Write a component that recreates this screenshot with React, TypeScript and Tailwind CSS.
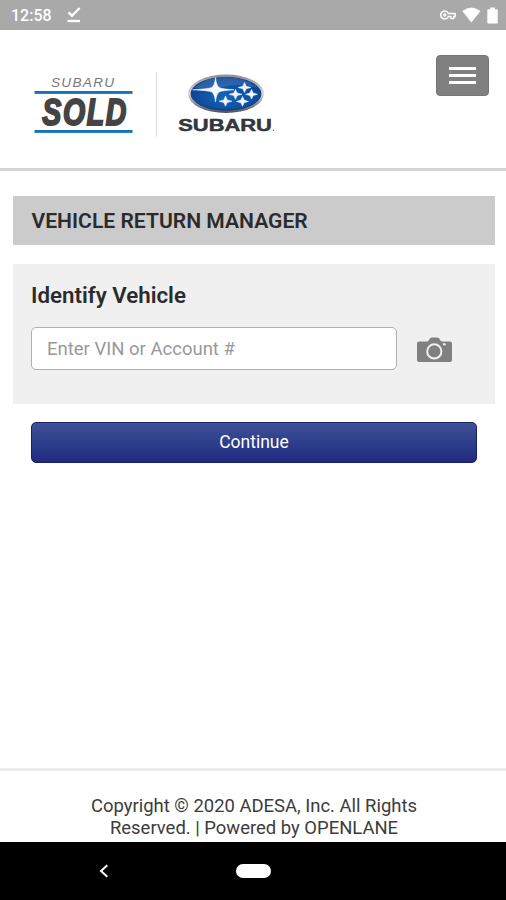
import React from 'react';

const StatusBar: React.FC = () => {
  return (
    <div className="h-[30px] bg-[#a9a9a9] flex items-center justify-between pl-[11px] pr-[8px] text-white">
      <div className="flex items-center gap-[15px]">
        <span className="text-[16px] leading-[30px] font-medium pt-[2px]">12:58</span>
        <svg width="14" height="16" viewBox="0 0 14 16" fill="none" stroke="#fff" strokeWidth="2.4">
          <path d="M1.6 5.4 5 8.8 12.6 1" />
          <path d="M0.5 14h12.5" />
        </svg>
      </div>
      <div className="flex items-center">
        <svg width="16" height="10" viewBox="0 0 16 10" fill="none" stroke="#fff" strokeWidth="1.5">
          <path d="M8.4 3.5A4 4 0 1 0 8.4 6.5H10.9V8.5H13.8V6.5H15.2V3.5Z" strokeLinejoin="round" />
          <circle cx="4.8" cy="5" r="1" />
        </svg>
        <svg className="ml-[6px]" width="19" height="16" viewBox="0 0 19 16">
          <path d="M0.3 4Q9.3-3.2 18.5 4L9.4 15.5Z" fill="#fff" />
        </svg>
        <svg className="ml-[6px]" width="11" height="17" viewBox="0 0 11 17">
          <path d="M3.2 0.5h4.6v1.8h2Q10.7 2.3 10.7 3.2V15.5Q10.7 16.5 9.8 16.5H1.2Q0.3 16.5 0.3 15.5V3.2Q0.3 2.3 1.2 2.3h2Z" fill="#fff" />
        </svg>
      </div>
    </div>
  );
};

const SoldLogo: React.FC = () => {
  return (
    <svg width="100" height="66" viewBox="34 72 100 66" fontFamily="Liberation Sans, Arial, sans-serif" fontStyle="italic">
      <text transform="translate(51 87.3)" fontSize="13.6" fill="#777" letterSpacing="1.3">SUBARU</text>
      <rect x="34.5" y="91" width="98" height="2.9" fill="#1673bd" />
      <text transform="translate(42.2 125) scale(0.76 1)" fontSize="37.5" fontWeight="bold" fill="#444" stroke="#444" strokeWidth="2" letterSpacing="2.2">SOLD</text>
      <rect x="34.5" y="130" width="98" height="2.9" fill="#1673bd" />
    </svg>
  );
};

const SubaruLogo: React.FC = () => {
  return (
    <svg width="100" height="66" viewBox="177 72 100 66" fontFamily="Liberation Sans, Arial, sans-serif">
      <defs>
        <linearGradient id="rim" x1="0" y1="0" x2="0" y2="1">
          <stop offset="0" stopColor="#8b8f96" />
          <stop offset="0.5" stopColor="#d5d8dc" />
          <stop offset="1" stopColor="#4a4e55" />
        </linearGradient>
        <radialGradient id="blue" cx="0.5" cy="0.6" r="0.6">
          <stop offset="0" stopColor="#1568bd" />
          <stop offset="1" stopColor="#0b3f8f" />
        </radialGradient>
      </defs>
      <ellipse cx="226" cy="93.8" rx="38" ry="19.2" fill="url(#rim)" />
      <ellipse cx="226" cy="93.8" rx="35" ry="16.4" fill="url(#blue)" stroke="#123468" strokeWidth="0.8" />
      <path d="M194 88Q206 77 226 77.6Q247 77.5 258 88Q239 82.5 223 87Q208 91 194 88Z" fill="#6fa0d6" opacity="0.3" />
      <g fill="#f4f7fb" stroke="#f4f7fb" strokeWidth="0.5">
        <path d="M215.5 77.5Q216.5 86.2 219.3 87.6Q222 89 234 89.8Q222 90.6 219.3 92Q216.5 93.4 215.5 102Q214.5 93.4 211.7 92Q208 90.6 192.5 89.8Q208 89 211.7 87.6Q214.5 86.2 215.5 77.5Z" />
        <path d="M244.5 82.5L246.2 86.2 251 87.5 246.2 88.8 244.5 92.5 242.8 88.8 238 87.5 242.8 86.2Z" />
        <path d="M235.5 89.5L237.2 93 242 94.3 237.2 95.6 235.5 99.3 233.8 95.6 229 94.3 233.8 93Z" />
        <path d="M251.5 89.5L253.2 93 257.5 94.3 253.2 95.6 251.5 99.1 249.8 95.6 245.5 94.3 249.8 93Z" />
        <path d="M225.5 96L227.2 99.9 232 101.2 227.2 102.5 225.5 106.2 223.8 102.5 219 101.2 223.8 99.9Z" />
        <path d="M242.5 96.5L244.2 100.1 248.5 101.4 244.2 102.7 242.5 106.3 240.8 102.7 236.5 101.4 240.8 100.1Z" />
      </g>
      <text transform="translate(178.2 130.9) scale(1.26 1)" fontSize="17.4" fontWeight="bold" fill="#33363b" stroke="#33363b" strokeWidth="0.5">SUBARU</text>
      <circle cx="273.6" cy="130.3" r="0.6" fill="#555" />
    </svg>
  );
};

const Header: React.FC = () => {
  return (
    <header className="h-[141px] border-b-[3px] border-[#d4d4d4] flex items-start justify-between pl-[34px] pr-[17px]">
      <div className="flex pt-[42px]">
        <SoldLogo />
        <div className="w-px h-[65px] bg-[#dedede] ml-[22px] mr-[20px]" />
        <SubaruLogo />
      </div>
      <button className="mt-[25px] w-[53px] h-[41px] rounded-[4px] bg-[#808080] border border-[#757575] flex flex-col items-center justify-center gap-[4px]">
        <span className="w-[27px] h-[3px] bg-white" />
        <span className="w-[27px] h-[3px] bg-white" />
        <span className="w-[27px] h-[3px] bg-white" />
      </button>
    </header>
  );
};

const CameraIcon: React.FC = () => {
  return (
    <svg width="35" height="26" viewBox="0 0 35 26">
      <path d="M2 4.5H10Q11.5 4.3 12.3 2.5Q13.2 0.5 15 0.5H20Q22 0.5 22.9 2.5Q23.7 4.3 25.2 4.5H33Q35 4.5 35 6.5V23Q35 25 33 25H2Q0 25 0 23V6.5Q0 4.5 2 4.5Z" fill="#808080" />
      <circle cx="17.3" cy="14.4" r="7.1" fill="none" stroke="#f0f0f0" strokeWidth="2" />
      <circle cx="27.3" cy="7.3" r="1.3" fill="#f0f0f0" />
    </svg>
  );
};

export default function App() {
  return (
    <div className="w-full h-[900px] bg-white flex flex-col font-['Roboto',sans-serif] text-[#2b2b2b] overflow-hidden">
      <StatusBar />
      <Header />
      <main className="flex-1 pl-[13px] pr-[11px] pt-[25px]">
        <h1 className="h-[49px] bg-[#cbcbcb] pl-[18.5px] text-[21.1px] leading-[50px] font-semibold">
          VEHICLE RETURN MANAGER
        </h1>
        <section className="mt-[19px] h-[140px] bg-[#f0f0f0] px-[18px] pt-[18px]">
          <h2 className="text-[22.3px] leading-[26px] font-semibold">Identify Vehicle</h2>
          <div className="mt-[19px] flex items-center">
            <input
              type="text"
              placeholder="Enter VIN or Account #"
              className="w-[366px] h-[43px] rounded-[5px] border border-[#b0b0b0] bg-white px-[15px] text-[18.5px] placeholder:text-[#999]"
            />
            <span className="ml-[20px] mt-[2px]">
              <CameraIcon />
            </span>
          </div>
        </section>
        <button className="ml-[18px] mt-[18px] w-[446px] h-[41px] rounded-[5px] border border-[#18206a] bg-linear-to-b from-[#3e5197] to-[#212a80] text-white text-[17.5px] font-normal">
          Continue
        </button>
      </main>
      <footer className="h-[74px] border-t-[3px] border-[#ececec] pt-[24px] pl-[2px] text-center text-[18.45px] leading-[22px] text-[#3c3c3c]">
        <p>Copyright © 2020 ADESA, Inc. All Rights</p>
        <p>Reserved. | Powered by OPENLANE</p>
      </footer>
      <nav className="h-[58px] bg-black flex items-center">
        <svg className="ml-[99px]" width="10" height="14" viewBox="0 0 10 14" fill="none" stroke="#fff" strokeWidth="2">
          <path d="M8.3 1.2 2 7l6.3 5.8" />
        </svg>
        <div className="ml-[127px] w-[35px] h-[14px] rounded-full bg-white" />
      </nav>
    </div>
  );
}
